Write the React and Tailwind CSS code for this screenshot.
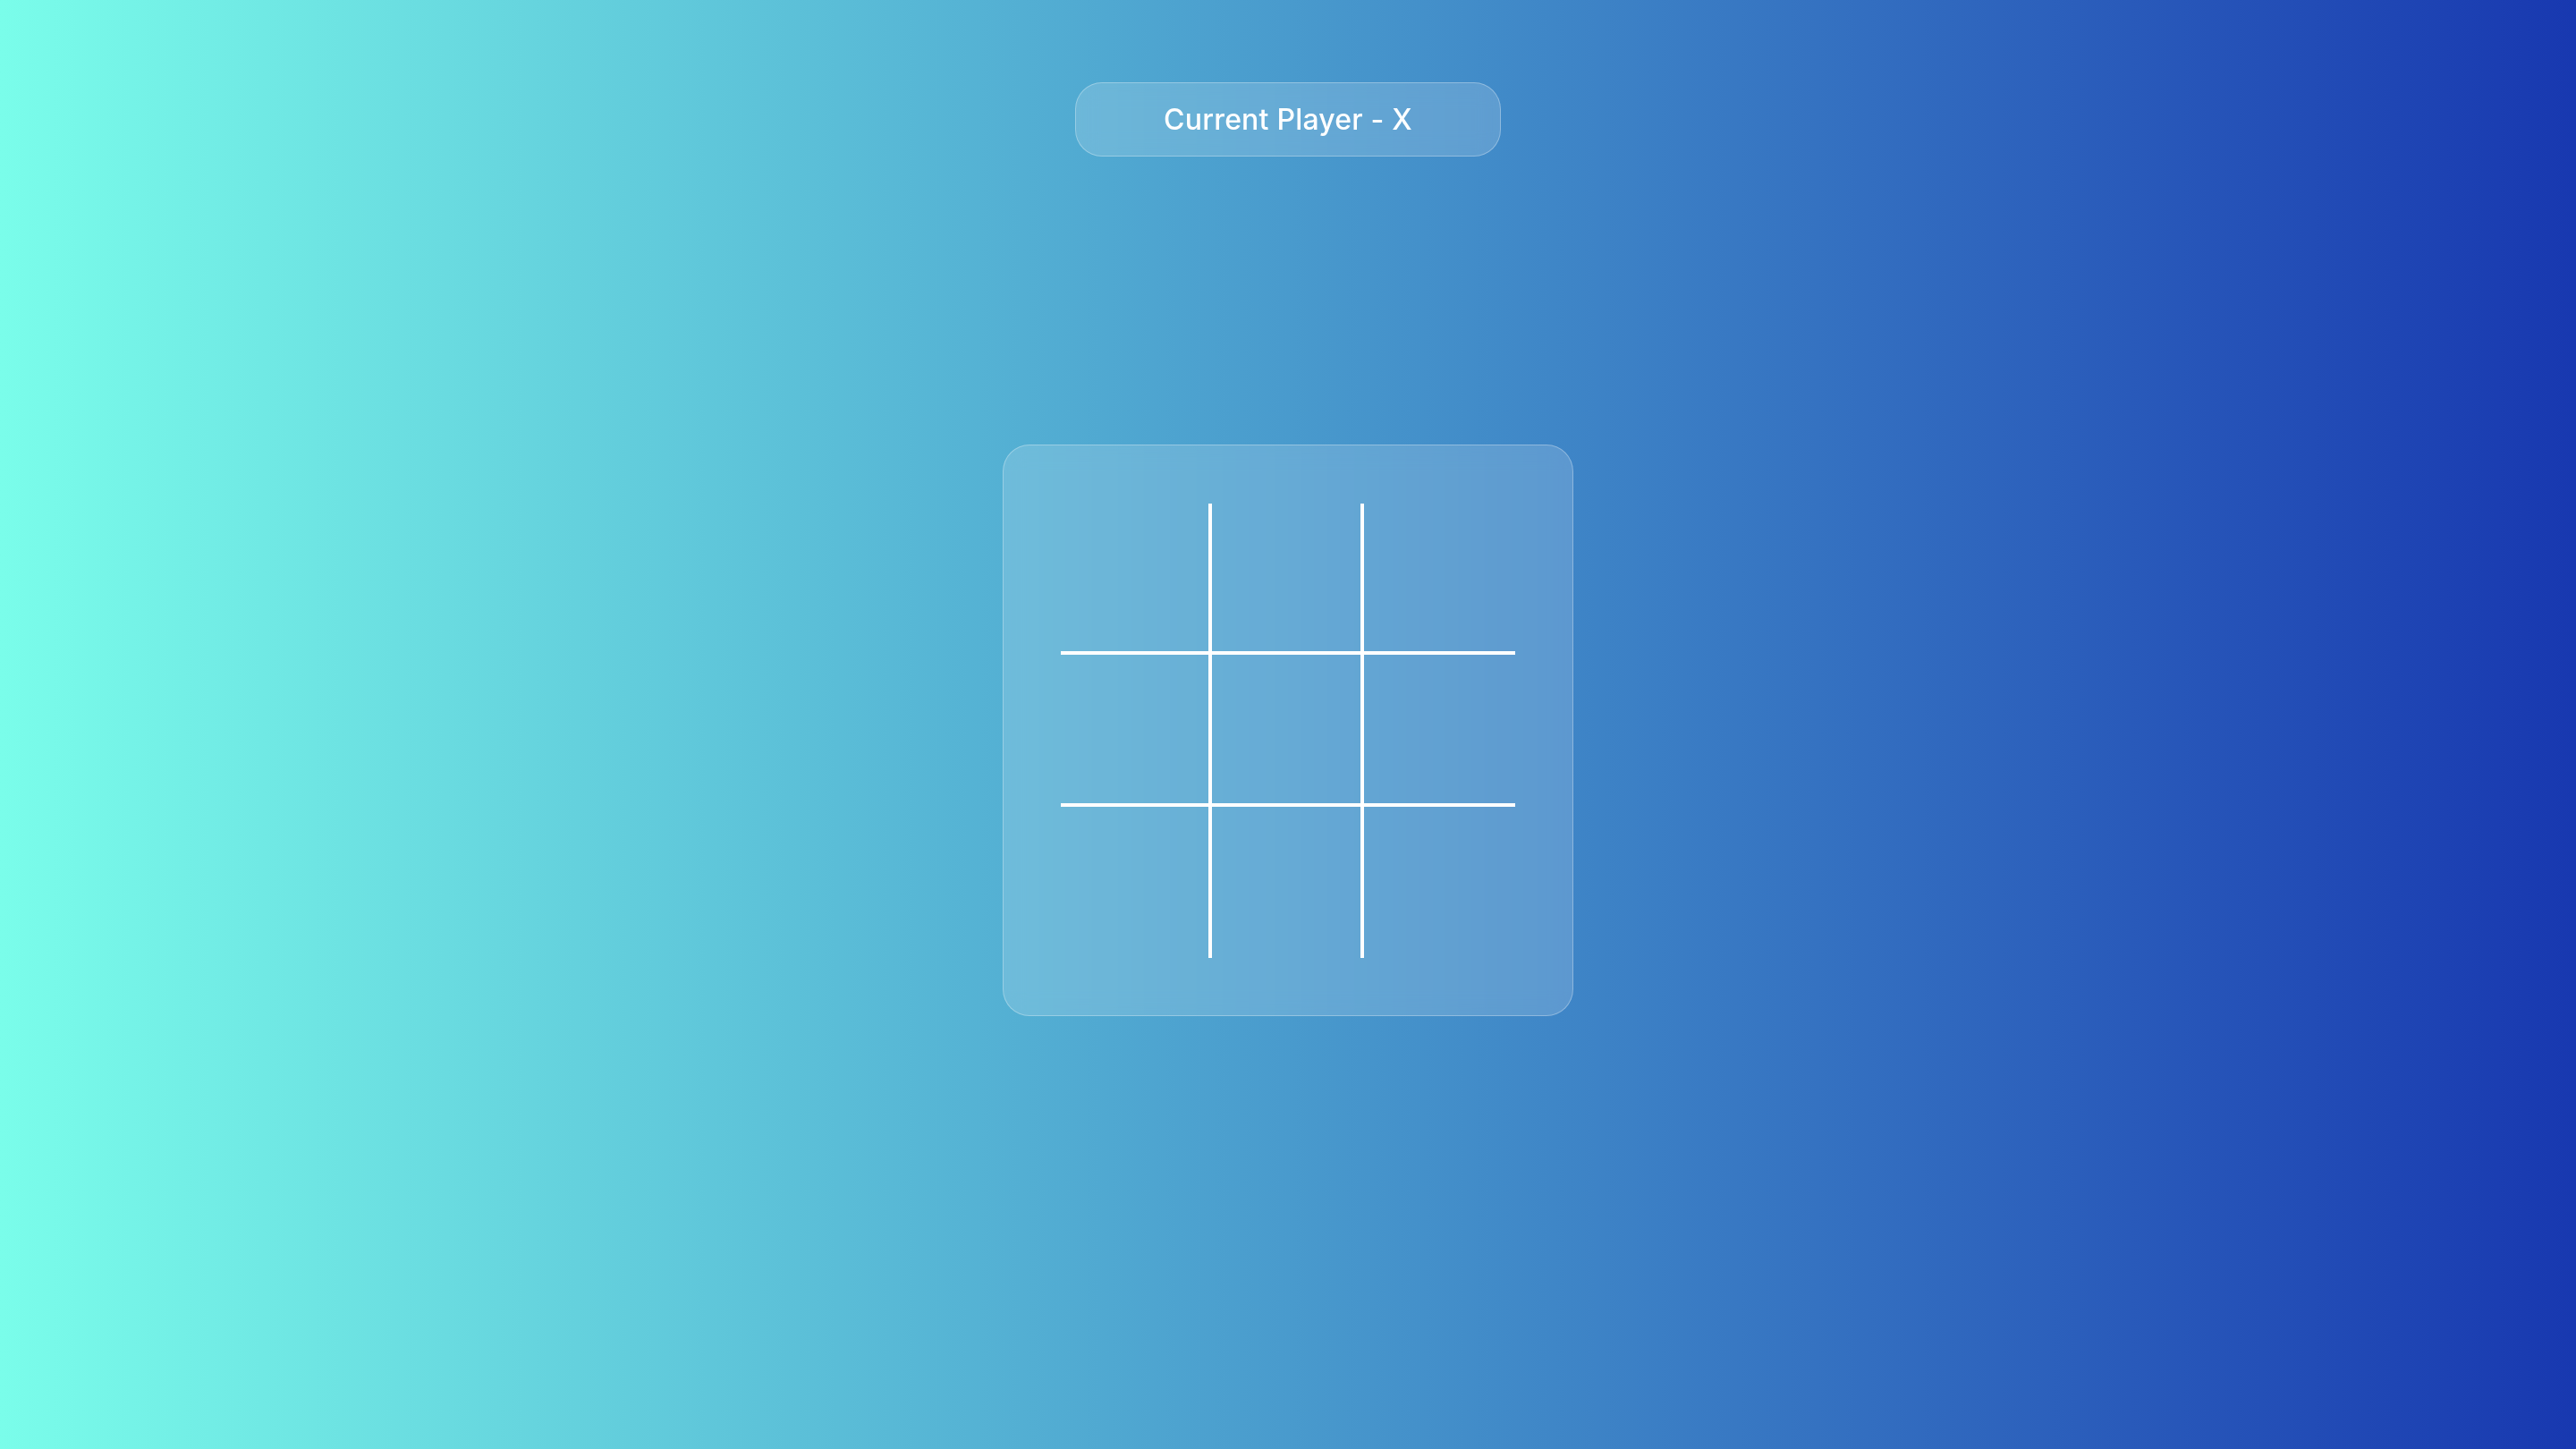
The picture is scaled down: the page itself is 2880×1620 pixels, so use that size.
import { useState } from 'react';

// tic tac toe board - glass card over a horizontal gradient
const cellBorder = (i) => {
    const col = i % 3;
    const row = Math.floor(i / 3);
    return [
        col === 1 ? 'border-x-4' : '',
        row === 1 ? 'border-y-4' : '',
    ].join(' ');
};

export default function App() {
    const [cells, setCells] = useState(Array(9).fill(null));
    const [player, setPlayer] = useState('X');

    const play = (i) => {
        if (cells[i]) return;
        const next = [...cells];
        next[i] = player;
        setCells(next);
        setPlayer(player === 'X' ? 'O' : 'X');
    };

    return (
        <div className="min-h-screen w-full bg-[linear-gradient(to_right,#7afdea,#1838b0)] flex flex-col items-center pt-[92px] font-['Inter',sans-serif]">
            {/* current player */}
            <div className="w-[476px] h-[83px] rounded-[30px] border border-white/30 bg-white/[0.16] backdrop-blur-md flex items-center justify-center">
                <span className="text-white text-[32px] font-medium tracking-[0.2px]">
                    Current Player - {player}
                </span>
            </div>

            {/* board */}
            <div className="mt-[322px] rounded-[30px] border border-white/30 bg-white/[0.16] backdrop-blur-md pt-[65px] pb-[64px] pl-[64px] pr-[64px]">
                <div className="grid grid-cols-[165px_174px_169px] grid-rows-[165px_174px_169px]">
                    {cells.map((c, i) => (
                        <button
                            key={i}
                            onClick={() => play(i)}
                            className={`${cellBorder(i)} border-white flex items-center justify-center text-white text-7xl font-semibold`}
                        >
                            {c}
                        </button>
                    ))}
                </div>
            </div>
        </div>
    );
}
